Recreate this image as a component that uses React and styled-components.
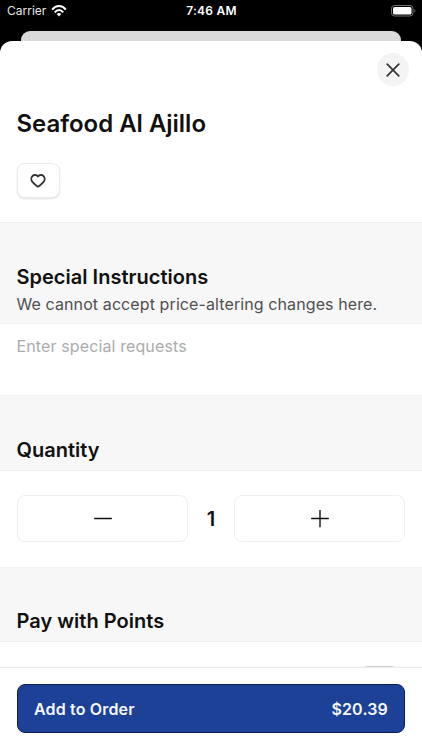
import React, { useState } from 'react';
import styled, { createGlobalStyle } from 'styled-components';

const GlobalStyle = createGlobalStyle`
  * {
    box-sizing: border-box;
  }

  body {
    margin: 0;
    background: #000000;
    font-family: Inter, 'Liberation Sans', sans-serif;
    color: #111111;
  }

  button {
    padding: 0;
    font-family: inherit;
    color: inherit;
    cursor: pointer;
  }
`;

const Screen = styled.div`
  display: flex;
  flex-direction: column;
  height: 750px;
  overflow: hidden;
  background: #000000;
`;

const StatusBar = styled.header`
  display: grid;
  grid-template-columns: 1fr auto 1fr;
  align-items: center;
  height: 31px;
  padding: 0 6px 9px 7px;
  font-size: 12px;
  line-height: 16px;
  color: #ffffff;
`;

const Carrier = styled.div`
  display: flex;
  align-items: center;
  gap: 5px;
  color: #e6e6e6;
`;

const Time = styled.div`
  font-weight: 600;
  letter-spacing: 0.25px;
`;

const Battery = styled.svg`
  justify-self: end;
`;

const PreviousSheet = styled.div`
  flex: none;
  height: 10px;
  margin: 0 21px;
  border-radius: 9px 9px 0 0;
  background: #dadada;
`;

const Sheet = styled.main`
  display: flex;
  flex: 1;
  flex-direction: column;
  min-height: 0;
  overflow: hidden;
  border-radius: 12px 12px 0 0;
  background: #ffffff;
`;

const Content = styled.div`
  flex: 1;
  min-height: 0;
  overflow: hidden;
`;

const Intro = styled.section`
  display: flex;
  flex-direction: column;
  height: 181px;
  padding: 12px 13px 0 16.5px;
`;

const CloseButton = styled.button`
  display: flex;
  align-items: center;
  justify-content: center;
  align-self: flex-end;
  width: 32px;
  height: 33px;
  border: none;
  border-radius: 50%;
  background: #f4f4f4;
`;

const Title = styled.h1`
  margin: 22px 0 24px;
  font-size: 24px;
  font-weight: 600;
  line-height: 31px;
  letter-spacing: -0.02px;
`;

const FavoriteButton = styled.button`
  display: flex;
  align-items: center;
  justify-content: center;
  width: 43px;
  height: 35px;
  border: 1px solid #ececec;
  border-radius: 8px;
  background: #ffffff;
  box-shadow: 0 1px 2px rgba(0, 0, 0, 0.12);
`;

const SectionHeader = styled.div`
  height: ${props => props.$height}px;
  padding: 39.5px 16.5px 0;
  border-top: 1px solid #f1f1f1;
  border-bottom: 1px solid #f0f0f0;
  background: #f7f7f7;
`;

const SectionTitle = styled.h2`
  margin: 0;
  font-size: 20px;
  font-weight: 600;
  line-height: 28px;
  letter-spacing: 0.02px;
`;

const SectionText = styled.p`
  margin: 0;
  font-size: 16px;
  line-height: 27px;
  letter-spacing: 0.1px;
  white-space: nowrap;
  color: #505050;
`;

const Requests = styled.textarea`
  display: block;
  width: 100%;
  height: 71px;
  padding: 11px 16.5px;
  border: none;
  outline: none;
  resize: none;
  background: #ffffff;
  font-family: inherit;
  font-size: 16px;
  line-height: 22px;
  letter-spacing: 0.12px;
  color: #111111;

  &::placeholder {
    color: #ababab;
    opacity: 1;
  }
`;

const Stepper = styled.div`
  display: grid;
  grid-template-columns: 1fr 46px 1fr;
  align-items: center;
  height: 96px;
  padding: 0 17px;
`;

const StepButton = styled.button`
  display: flex;
  align-items: center;
  justify-content: center;
  height: 47px;
  border: 1px solid #efefef;
  border-radius: 8px;
  background: #ffffff;
`;

const Count = styled.div`
  font-size: 20px;
  font-weight: 600;
  text-align: center;
`;

const PointsRow = styled.div`
  display: flex;
  justify-content: flex-end;
  padding: 24px 17px;
`;

const Toggle = styled.button`
  width: 51px;
  height: 31px;
  border: none;
  border-radius: 16px;
  background: #d6d6d6;
`;

const Footer = styled.footer`
  height: 83px;
  padding: 16px 17px 0;
  border-top: 1px solid #ebebeb;
  background: #ffffff;
  box-shadow: 0 -1px 2px rgba(0, 0, 0, 0.04);
`;

const OrderButton = styled.button`
  display: flex;
  align-items: center;
  justify-content: space-between;
  width: 100%;
  height: 49px;
  padding: 0 16px;
  border: 1px solid #101d50;
  border-radius: 8px;
  background: #1d4196;
  font-size: 16px;
  font-weight: 600;
  letter-spacing: 0.16px;
  color: #f5f8ff;
`;

const WifiIcon = () => (
  <svg width="16" height="12" viewBox="0 0 16 12" fill="none" stroke="#ffffff" strokeWidth="2">
    <path d="M1.2 4.6C5-.2 11-.2 14.8 4.6" />
    <path d="M3.8 7.3C6.2 4.3 9.8 4.3 12.2 7.3" />
    <path d="M5.7 9.1C7 7.7 9 7.7 10.3 9.1L8 11.6Z" fill="#ffffff" stroke="none" />
  </svg>
);

const BatteryIcon = () => (
  <Battery width="25" height="12" viewBox="0 0 25 12" fill="none">
    <rect x="0.5" y="0.5" width="21.5" height="10.5" rx="3" stroke="#737373" />
    <rect x="2" y="2" width="18.5" height="7.5" rx="1.6" fill="#ffffff" />
    <path d="M23.4 4C24.7 4.5 24.7 7 23.4 7.5Z" fill="#737373" />
  </Battery>
);

const CloseIcon = () => (
  <svg width="14" height="14" viewBox="0 0 14 14" stroke="#333333" strokeWidth="1.7" strokeLinecap="round">
    <path d="M1.2 1.2L12.8 12.8M12.8 1.2L1.2 12.8" />
  </svg>
);

const HeartIcon = () => (
  <svg width="16" height="14" viewBox="0 0 16 14" fill="none" stroke="#333333" strokeWidth="1.8" strokeLinejoin="round">
    <path d="M8 2.6C6.6.6 3.9.5 2.4 2.1C.8 3.9 1.1 6.5 2.6 8.1C4.1 9.7 5.8 11.2 7.2 12.3C7.7 12.7 8.3 12.7 8.8 12.3C10.2 11.2 11.9 9.7 13.4 8.1C14.9 6.5 15.2 3.9 13.6 2.1C12.1.5 9.4.6 8 2.6Z" />
  </svg>
);

const MinusIcon = () => (
  <svg width="18" height="18" viewBox="0 0 18 18" stroke="#111111" strokeWidth="1.4" strokeLinecap="round">
    <path d="M.7 8.5H17.3" />
  </svg>
);

const PlusIcon = () => (
  <svg width="18" height="18" viewBox="0 0 18 18" stroke="#111111" strokeWidth="1.4" strokeLinecap="round">
    <path d="M.7 8.5H17.3M9 .4V16.8" />
  </svg>
);

function App() {
  const [quantity, setQuantity] = useState(1);
  const total = (20.39 * quantity).toFixed(2);

  return (
    <Screen>
      <GlobalStyle />
      <StatusBar>
        <Carrier>
          Carrier
          <WifiIcon />
        </Carrier>
        <Time>7:46 AM</Time>
        <BatteryIcon />
      </StatusBar>
      <PreviousSheet />
      <Sheet>
        <Content>
          <Intro>
            <CloseButton aria-label="Close">
              <CloseIcon />
            </CloseButton>
            <Title>Seafood Al Ajillo</Title>
            <FavoriteButton aria-label="Favorite">
              <HeartIcon />
            </FavoriteButton>
          </Intro>

          <SectionHeader $height={102}>
            <SectionTitle>Special Instructions</SectionTitle>
            <SectionText>We cannot accept price-altering changes here.</SectionText>
          </SectionHeader>
          <Requests placeholder="Enter special requests" />

          <SectionHeader $height={75.5}>
            <SectionTitle>Quantity</SectionTitle>
          </SectionHeader>
          <Stepper>
            <StepButton aria-label="Decrease" onClick={() => setQuantity(Math.max(1, quantity - 1))}>
              <MinusIcon />
            </StepButton>
            <Count>{quantity}</Count>
            <StepButton aria-label="Increase" onClick={() => setQuantity(quantity + 1)}>
              <PlusIcon />
            </StepButton>
          </Stepper>

          <SectionHeader $height={75}>
            <SectionTitle>Pay with Points</SectionTitle>
          </SectionHeader>
          <PointsRow>
            <Toggle aria-label="Pay with points" />
          </PointsRow>
        </Content>

        <Footer>
          <OrderButton>
            <span>Add to Order</span>
            <span>${total}</span>
          </OrderButton>
        </Footer>
      </Sheet>
    </Screen>
  );
}

export default App;
